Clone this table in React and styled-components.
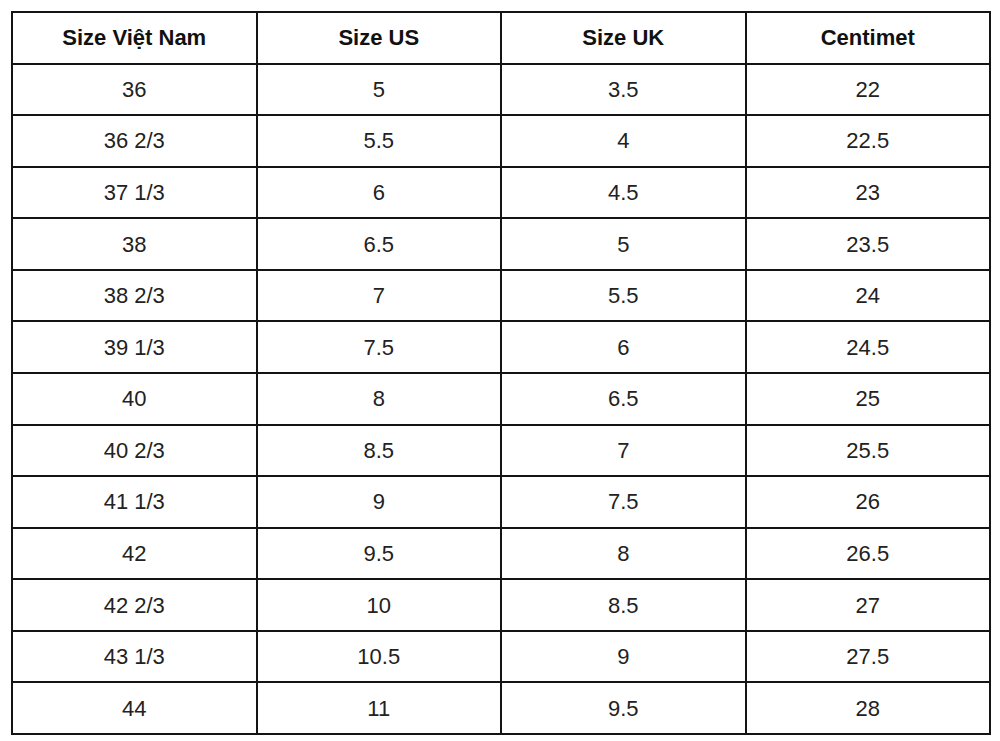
import React from "react";
import styled, { createGlobalStyle } from "styled-components";

const GlobalStyle = createGlobalStyle`
  html, body {
    margin: 0;
    padding: 0;
    background: #ffffff;
  }
  body {
    font-family: "Liberation Sans", Arial, sans-serif;
  }
`;

const Page = styled.div`
  padding: 11px 0 0 11px;
  background: #ffffff;
`;

const Table = styled.div`
  box-sizing: border-box;
  width: 980px;
  height: 724px;
  display: grid;
  grid-template-columns: repeat(4, 1fr);
  grid-template-rows: repeat(14, 1fr);
  border-top: 2px solid #141414;
  border-left: 2px solid #141414;
`;

const Cell = styled.div`
  box-sizing: border-box;
  display: flex;
  align-items: center;
  justify-content: center;
  border-right: 2px solid #141414;
  border-bottom: 2px solid #141414;
  font-family: "Liberation Sans", Arial, sans-serif;
  font-size: 22px;
  font-weight: ${(p) => (p.$head ? 700 : 400)};
  color: ${(p) => (p.$head ? "#111111" : "#222222")};
  line-height: 1;
  padding-top: 1px;
`;

const headers = ["Size Việt Nam", "Size US", "Size UK", "Centimet"];

const rows = [
  ["36", "5", "3.5", "22"],
  ["36 2/3", "5.5", "4", "22.5"],
  ["37 1/3", "6", "4.5", "23"],
  ["38", "6.5", "5", "23.5"],
  ["38 2/3", "7", "5.5", "24"],
  ["39 1/3", "7.5", "6", "24.5"],
  ["40", "8", "6.5", "25"],
  ["40 2/3", "8.5", "7", "25.5"],
  ["41 1/3", "9", "7.5", "26"],
  ["42", "9.5", "8", "26.5"],
  ["42 2/3", "10", "8.5", "27"],
  ["43 1/3", "10.5", "9", "27.5"],
  ["44", "11", "9.5", "28"],
];

export default function App() {
  return (
    <>
      <GlobalStyle />
      <Page>
        <Table>
          {headers.map((h) => (
            <Cell key={h} $head>
              {h}
            </Cell>
          ))}
          {rows.map((r, i) =>
            r.map((v, j) => <Cell key={`${i}-${j}`}>{v}</Cell>)
          )}
        </Table>
      </Page>
    </>
  );
}
